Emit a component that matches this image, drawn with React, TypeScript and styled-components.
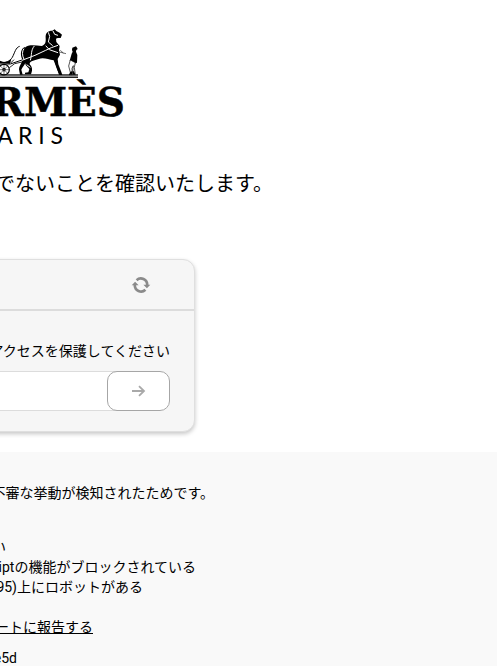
import React from "react";
import styled, { createGlobalStyle } from "styled-components";

const GlobalStyle = createGlobalStyle`
  * { box-sizing: border-box; }
  html, body { margin: 0; background: #fff; overflow: hidden; }
  body {
    font-family: Roboto, "Noto Sans CJK JP", sans-serif;
    font-size: 14px;
    line-height: 20px;
    color: #000;
  }
`;

const Page = styled.main`
  overflow: hidden;
`;

const Logo = styled.svg`
  display: block;
  width: 140px;
  height: 130px;
  margin-top: 20px;
`;

/* A line that ends at a fixed measure and runs off the left side. */
const Line = styled.p<{ $end: number; $gap?: number }>`
  display: flex;
  justify-content: flex-end;
  width: ${(p) => p.$end}px;
  margin: ${(p) => p.$gap ?? 0}px 0 0;
  white-space: nowrap;
`;

const Title = styled.h1`
  display: flex;
  justify-content: flex-end;
  width: 273px;
  margin: 19px 0 0;
  font-size: 20px;
  font-weight: 400;
  line-height: 30px;
  white-space: nowrap;
`;

const Card = styled.section`
  width: 390px;
  margin: 60px 0 20px -195px;
  border: 1px solid #dfdfdf;
  border-radius: 12px;
  background: #f6f6f6;
  box-shadow: 0 2px 4px rgba(0, 0, 0, 0.22);
`;

const CardHeader = styled.header`
  display: flex;
  align-items: center;
  justify-content: flex-end;
  height: 51px;
  padding-right: 43px;
  border-bottom: 2px solid #dcdcdc;
`;

const IconButton = styled.button`
  display: flex;
  padding: 0;
  border: 0;
  background: none;
`;

const CardBody = styled.form`
  padding: 30px 24px 20px;
`;

const Label = styled.label`
  display: flex;
  justify-content: flex-end;
  white-space: nowrap;
`;

const Field = styled.div`
  display: flex;
  height: 40px;
  margin-top: 10px;
  border-radius: 10px;
  background: #fff;
`;

const Input = styled.input`
  flex: 1;
  min-width: 0;
  margin-right: -10px;
  border: 1px solid #dcdcdc;
  border-radius: 10px 0 0 10px;
  background: #fff;
  font: inherit;
`;

const Submit = styled.button`
  display: flex;
  align-items: center;
  justify-content: center;
  width: 63px;
  padding: 0;
  border: 1px solid #a6a6a6;
  border-radius: 10px;
  background: #fff;
  z-index: 1;
`;

const Details = styled.footer`
  min-height: 214px;
  padding-top: 31px;
  background: #f9f9f9;
`;

const List = styled.ul`
  margin: 34px 0 20px;
  padding: 0;
  list-style: none;
`;

const Report = styled.a`
  color: inherit;
  text-decoration: underline;
`;

function Brand() {
  return (
    <Logo viewBox="0 0 140 130" role="img" aria-label="HERMÈS PARIS">
      <g transform="scale(0.3333)">
        <path d="M0 163H234V167H0Z" fill="#222" />
        <path d="M0 167H234V171H0Z" fill="#888" />
        <path d="M0 171H234V174H0Z" fill="#222" />
        <g fill="none" stroke="#000" strokeWidth="2.5">
          <circle cx="12" cy="149" r="16" strokeWidth="3.5" />
          <circle cx="12" cy="149" r="4" />
          <path d="M12 133V165M-4 149H28M1 138L23 160M23 138L1 160" strokeWidth="1.6" />
          <path d="M0 125C16 132 30 123 37 112C44 99 47 82 59 79" strokeWidth="3" />
          <path d="M0 132L31 132L66 120L105 107L137 90" strokeWidth="3" />
          <path d="M28 143L44 131L75 124M32 129L42 119" />
        </g>
        <path d="M0 122C12 130 25 125 34 117L30 131L0 130Z" />
        <path d="M75 81C62 86 60 102 66 117C69 127 58 135 57 148L60 164H68L64 149C69 138 77 134 77 120C76 106 68 100 76 91Z" />
        <path d="M78 80C91 73 109 77 125 78C136 74 138 67 137 54C136 39 143 32 157 32L164 28L169 33L179 38L186 44L182 54L173 54L168 56L169 66L179 78L177 91L180 104L173 117L175 133L184 156L187 165H179L172 150L161 121C145 118 129 111 116 117C103 122 88 122 89 133C99 142 97 154 93 163H75V158L85 157L88 147L77 135L74 124C65 104 66 89 78 80Z" />
        <g fill="none" stroke="#fff" strokeWidth="3">
          <path d="M103 78C92 91 96 104 91 121M66 121L105 106L137 91L154 83L174 76M137 77L148 89L174 98M145 37L149 49L145 66L158 77M159 33L164 43L174 46" />
          <path d="M72 86C66 94 66 105 72 118M80 134L91 142" />
        </g>
        <path d="M166 83L178 96L198 101M181 91L190 99" fill="none" stroke="#000" strokeWidth="1.7" />
        <path d="M163 121L177 164H185L173 143L167 120Z" />
        <path d="M217 83L228 79L231 83L233 87L229 90L228 95L232 105L231 128L226 130L217 126L209 122L215 101L218 95L216 90Z" />
        <path d="M211 120L206 138L212 161L207 164H217L216 145L220 137L218 158L226 164L223 142L226 128Z" fill="#fff" stroke="#000" strokeWidth="2" />
        <path d="M211 155L216 154L217 164H207ZM218 154L222 154L226 164H218Z" />
      </g>
      <text x="125" y="96" textAnchor="end" fontFamily="DejaVu Serif" fontWeight="700" fontSize="39" stroke="#000" strokeWidth="0.5">HERMÈS</text>
      <text x="63" y="124" textAnchor="end" fontFamily="Lato" fontSize="23">P A R I S</text>
    </Logo>
  );
}

function RefreshIcon() {
  return (
    <svg width="20" height="18" viewBox="0 0 20 18" aria-hidden="true">
      <path d="M5.6 4.2A6.3 6.3 0 0 1 16.2 9M14.4 13.8A6.3 6.3 0 0 1 3.8 9" fill="none" stroke="#8a8a8a" strokeWidth="2.7" />
      <path d="M12.4 8.8H19.3L15.9 12.3ZM.7 9.2H7.6L4.1 5.7Z" fill="#8a8a8a" />
    </svg>
  );
}

function ArrowIcon() {
  return (
    <svg width="14" height="12" viewBox="0 0 14 12" fill="none" stroke="#a9a9a9" strokeWidth="1.8" aria-hidden="true">
      <path d="M0 6H12M7 1.2L12 6L7 10.8" />
    </svg>
  );
}

export default function App() {
  return (
    <>
      <GlobalStyle />
      <Page>
        <Brand />
        <Title>でないことを確認いたします。</Title>
        <Card>
          <CardHeader>
            <IconButton type="button" aria-label="更新">
              <RefreshIcon />
            </IconButton>
          </CardHeader>
          <CardBody>
            <Label htmlFor="answer">アクセスを保護してください</Label>
            <Field>
              <Input id="answer" type="text" />
              <Submit type="button" aria-label="送信">
                <ArrowIcon />
              </Submit>
            </Field>
          </CardBody>
        </Card>
        <Details>
          <Line $end={214}>不審な挙動が検知されたためです。</Line>
          <List>
            <Line as="li" $end={6}>い</Line>
            <Line as="li" $end={196}>riptの機能がブロックされている</Line>
            <Line as="li" $end={143}>95)上にロボットがある</Line>
          </List>
          <Line $end={93}>
            <Report href="#report">ートに報告する</Report>
          </Line>
          <Line $end={17} $gap={11}>e5d</Line>
        </Details>
      </Page>
    </>
  );
}
